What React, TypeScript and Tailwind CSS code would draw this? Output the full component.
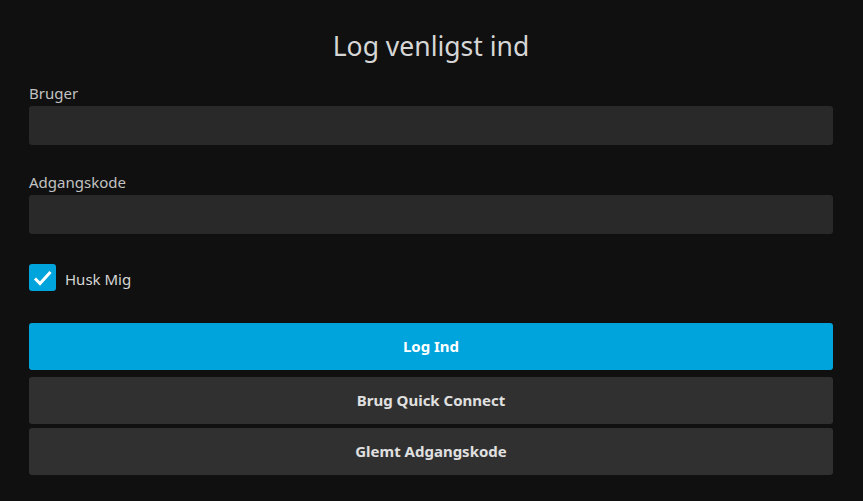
import { useState } from 'react'

export default function App() {
    const [remember, setRemember] = useState(true)

    return (
        <div className="min-h-[501px] bg-[#101010] pl-[29px] pr-[30px] font-['Noto_Sans',sans-serif]">
            <h1 className="pt-[27px] text-center text-[26.5px] leading-[38px] font-normal text-[#d6d6d6]">
                Log venligst ind
            </h1>

            <form className="flex flex-col" onSubmit={(e) => e.preventDefault()}>
                <div className="mt-[18px] flex flex-col">
                    <label className="mb-[3px] text-[15px] leading-[20px] text-[#c2c2c2]">Bruger</label>
                    <input type="text" className="h-[39px] rounded-[3px] bg-[#292929] px-3 text-[15px] text-white outline-none" />
                </div>

                <div className="mt-[27px] flex flex-col">
                    <label className="mb-[3px] text-[15px] leading-[20px] text-[#c2c2c2]">Adgangskode</label>
                    <input type="password" className="h-[39px] rounded-[3px] bg-[#292929] px-3 text-[15px] text-white outline-none" />
                </div>

                <label className="mt-[30px] flex items-center gap-[9px] cursor-pointer">
                    <span
                        className="flex h-[27px] w-[27px] items-center justify-center rounded-[3px] bg-[#00a4dc]"
                        onClick={() => setRemember(!remember)}
                    >
                        {remember && (
                            <svg width="27" height="27" viewBox="0 0 27 27" fill="none">
                                <path d="M6 14.5 L11 19.5 L21.5 8" stroke="white" strokeWidth="3" />
                            </svg>
                        )}
                    </span>
                    <span className="mt-[3px] text-[15px] leading-[20px] text-[#d6d6d6]">Husk Mig</span>
                </label>

                <button type="submit" className="mt-[32px] h-[47px] rounded-[3px] bg-[#00a4dc] text-[15px] font-bold text-white">
                    Log Ind
                </button>
                <button type="button" className="mt-[7px] h-[47px] rounded-[3px] bg-[#303030] text-[15px] font-bold text-[#e0e0e0]">
                    Brug Quick Connect
                </button>
                <button type="button" className="mt-[4px] h-[47px] rounded-[3px] bg-[#303030] text-[15px] font-bold text-[#e0e0e0]">
                    Glemt Adgangskode
                </button>
            </form>
        </div>
    )
}
